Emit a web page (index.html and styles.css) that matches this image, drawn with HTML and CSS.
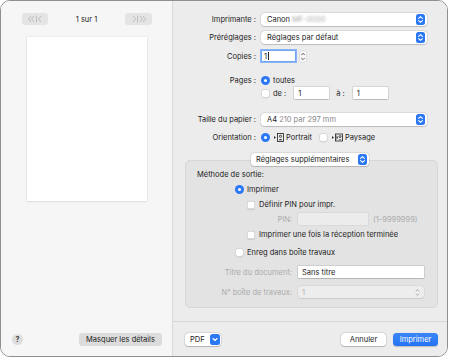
FILE: index.html
```html
<!DOCTYPE html>
<html lang="fr">
<head>
  <meta charset="UTF-8" />
  <meta name="viewport" content="width=device-width, initial-scale=1.0"/>
  <title>Imprimer</title>
  <link rel="stylesheet" href="styles.css">
</head>
<body>
  <div class="window">
    <aside class="sidebar">
      <div class="pager">
        <span class="pager-btn">
          <svg width="26" height="12" viewBox="0 0 26 12"><path d="M9 3 L6.5 6 L9 9 M12 3 L9.5 6 L12 9 M14.5 2.5 V9.5 M19 3 L16.5 6 L19 9" /></svg>
        </span>
        <span class="pager-count">1 sur 1</span>
        <span class="pager-btn">
          <svg width="27" height="12" viewBox="0 0 27 12"><path d="M8 3 L10.5 6 L8 9 M12.5 2.5 V9.5 M15 3 L17.5 6 L15 9 M18 3 L20.5 6 L18 9" /></svg>
        </span>
      </div>
      <div class="preview"></div>
      <div class="side-foot">
        <span class="help">?</span>
        <button class="btn btn-grey">Masquer les détails</button>
      </div>
    </aside>

    <section class="main">
      <div class="row row-printer">
        <span class="lbl">Imprimante :</span>
        <div class="popup">
          <span>Canon</span><span class="blurred">MF-0000</span>
          <span class="badge"><svg width="9" height="11" viewBox="0 0 9 11"><path d="M2.6 4.3 L4.5 2.6 L6.4 4.3 M2.6 6.7 L4.5 8.4 L6.4 6.7" /></svg></span>
        </div>
      </div>
      <div class="row row-presets">
        <span class="lbl">Préréglages :</span>
        <div class="popup">
          <span>Réglages par défaut</span>
          <span class="badge"><svg width="9" height="11" viewBox="0 0 9 11"><path d="M2.6 4.3 L4.5 2.6 L6.4 4.3 M2.6 6.7 L4.5 8.4 L6.4 6.7" /></svg></span>
        </div>
      </div>
      <div class="row row-copies">
        <span class="lbl">Copies :</span>
        <div class="field field-copies focus">1<span class="caret"></span></div>
        <span class="stepper">
          <svg width="8" height="13" viewBox="0 0 8 13"><rect x="0.5" y="0.5" width="7" height="12" rx="2.5" /><path d="M2.3 5 L4 3.3 L5.7 5 M2.3 8 L4 9.7 L5.7 8" /></svg>
        </span>
      </div>
      <div class="row row-pages">
        <span class="lbl">Pages :</span>
        <span class="radio on"></span><span>toutes</span>
      </div>
      <div class="row row-range">
        <span class="lbl"></span>
        <span class="radio"></span><span class="range-de">de :</span>
        <div class="field field-page">1</div>
        <span class="range-a">à :</span>
        <div class="field field-page">1</div>
      </div>
      <div class="row row-paper">
        <span class="lbl">Taille du papier :</span>
        <div class="popup">
          <span>A4 <span class="muted">210 par 297 mm</span></span>
          <span class="badge"><svg width="9" height="11" viewBox="0 0 9 11"><path d="M2.6 4.3 L4.5 2.6 L6.4 4.3 M2.6 6.7 L4.5 8.4 L6.4 6.7" /></svg></span>
        </div>
      </div>
      <div class="row row-orient">
        <span class="lbl">Orientation :</span>
        <span class="radio on"></span>
        <svg class="orient-icon" width="10" height="9" viewBox="0 0 10 9"><path class="tri" d="M0 3 L2 4.5 L0 6 Z" /><rect x="3.5" y="0.5" width="6" height="8" /><circle cx="6.5" cy="3.3" r="1.1" /><path class="fill" d="M4.6 7.2 Q6.5 4.6 8.4 7.2 Z" /></svg>
        <span class="orient-text">Portrait</span>
        <span class="radio"></span>
        <svg class="orient-icon" width="11" height="9" viewBox="0 0 11 9"><path class="tri" d="M0 3 L2 4.5 L0 6 Z" /><rect x="3.5" y="1" width="7" height="7" /><path class="fill" d="M4.5 2 V7 L6 4.5 Z" /><circle cx="8" cy="3.6" r="1" /><path class="fill" d="M6.5 6.8 Q8 5 9.5 6.8 Z" /></svg>
        <span>Paysage</span>
      </div>

      <div class="section-head">
        <div class="popup popup-section">
          <span>Réglages supplémentaires</span>
          <span class="badge"><svg width="9" height="11" viewBox="0 0 9 11"><path d="M2.6 4.3 L4.5 2.6 L6.4 4.3 M2.6 6.7 L4.5 8.4 L6.4 6.7" /></svg></span>
        </div>
      </div>
      <div class="group">
        <div class="brow brow-title">Méthode de sortie:</div>
        <div class="brow brow-print">
          <span class="radio on"></span><span>Imprimer</span>
        </div>
        <div class="brow brow-pin">
          <span class="check"></span><span>Définir PIN pour impr.</span>
        </div>
        <div class="brow brow-pinfield">
          <span class="blbl disabled">PIN:</span>
          <div class="field field-pin"></div>
          <span class="disabled pin-range">(1-9999999)</span>
        </div>
        <div class="brow brow-once">
          <span class="check"></span><span>Imprimer une fois la réception terminée</span>
        </div>
        <div class="brow brow-box">
          <span class="radio"></span><span>Enreg dans boîte travaux</span>
        </div>
        <div class="brow brow-doc">
          <span class="blbl disabled">Titre du document:</span>
          <div class="field field-doc">Sans titre</div>
        </div>
        <div class="brow brow-num">
          <span class="blbl disabled">N° boîte de travaux:</span>
          <div class="field field-doc field-off">
            <span>1</span>
            <svg width="7" height="9" viewBox="0 0 7 9"><path d="M1.8 3.3 L3.5 1.7 L5.2 3.3 M1.8 5.7 L3.5 7.3 L5.2 5.7" /></svg>
          </div>
        </div>
      </div>

      <div class="foot">
        <div class="btn btn-white btn-pdf">
          <span>PDF</span>
          <span class="badge"><svg width="10" height="11" viewBox="0 0 10 11"><path d="M3 4.5 L5 6.5 L7 4.5" /></svg></span>
        </div>
        <button class="btn btn-white btn-cancel">Annuler</button>
        <button class="btn btn-blue">Imprimer</button>
      </div>
    </section>
  </div>
</body>
</html>
```

FILE: styles.css
```css
body {
  margin: 0;
  background: #ffffff;
  font-family: Inter, "Liberation Sans", Arial, sans-serif;
  font-size: 7.5px;
  color: #1c1c1c;
}
.window {
  width: 446px;
  height: 355px;
  border: 1px solid #8f8f8f;
  border-radius: 10px;
  overflow: hidden;
  display: flex;
}

/* left column */
.sidebar {
  width: 171px;
  flex: none;
  background: #f6f6f6;
  border-right: 1px solid #d9d9d9;
  display: flex;
  flex-direction: column;
}
.pager {
  display: flex;
  justify-content: space-between;
  align-items: center;
  padding: 12px 20px 0 21px;
}
.pager-btn {
  height: 12px;
  background: #e4e4e4;
  border-radius: 3px;
  display: flex;
}
.pager-btn svg path {
  fill: none;
  stroke: #b9b9b9;
  stroke-width: 0.9;
}
.pager-count {
  color: #2a2a2a;
}
.preview {
  margin: 12px 0 0 26px;
  width: 120px;
  height: 164px;
  background: #ffffff;
  box-shadow: 0 0 0 0.5px rgba(0, 0, 0, 0.07), 0 1px 2px rgba(0, 0, 0, 0.07);
}
.side-foot {
  margin-top: auto;
  display: flex;
  align-items: center;
  padding: 0 10px 10px 11px;
}
.help {
  width: 11px;
  height: 11px;
  border-radius: 50%;
  background: #dedede;
  color: #3a3a3a;
  font-size: 7px;
  font-weight: 700;
  display: flex;
  align-items: center;
  justify-content: center;
}

/* buttons */
.btn {
  height: 13px;
  border: none;
  border-radius: 3.5px;
  padding: 0;
  font: inherit;
  color: #1c1c1c;
  display: flex;
  align-items: center;
  justify-content: center;
}
.btn-grey {
  margin-left: auto;
  width: 83px;
  background: #dcdcdc;
}
.btn-white {
  background: #ffffff;
  box-shadow: 0 0 0 0.5px rgba(0, 0, 0, 0.14), 0 0.5px 1px rgba(0, 0, 0, 0.18);
}
.btn-blue {
  width: 45px;
  margin-left: 7px;
  background: linear-gradient(#3b86f7, #2673f3);
  color: #ffffff;
  box-shadow: 0 0.5px 1px rgba(0, 0, 0, 0.2);
}

/* right column */
.main {
  flex: 1;
  background: #ececec;
  display: flex;
  flex-direction: column;
}
.row {
  display: flex;
  align-items: center;
  height: 13px;
}
.lbl {
  width: 83px;
  flex: none;
  margin-right: 5px;
  text-align: right;
}
.row-printer { margin-top: 12px; }
.row-presets { margin-top: 5px; }
.row-copies { margin-top: 5px; height: 14px; }
.row-pages { margin-top: 11px; }
.row-range { height: 12px; }
.row-paper { margin-top: 14px; }
.row-orient { margin-top: 5px; }

.popup {
  width: 166px;
  height: 13px;
  box-sizing: border-box;
  padding: 0 2px 0 6px;
  background: #ffffff;
  border-radius: 3.5px;
  box-shadow: 0 0 0 0.5px rgba(0, 0, 0, 0.13), 0 0.5px 1px rgba(0, 0, 0, 0.15);
  display: flex;
  align-items: center;
}
.popup .badge {
  margin-left: auto;
}
.badge {
  width: 9px;
  height: 11px;
  border-radius: 2.5px;
  background: #2b77f4;
  display: flex;
}
.badge svg path {
  fill: none;
  stroke: #ffffff;
  stroke-width: 1.1;
  stroke-linecap: round;
  stroke-linejoin: round;
}
.blurred {
  margin-left: 2px;
  color: #a9a9a9;
  filter: blur(1px);
}
.muted {
  color: #888888;
}

.field {
  height: 12px;
  box-sizing: border-box;
  padding-left: 4px;
  background: #ffffff;
  box-shadow: 0 0 0 0.5px rgba(0, 0, 0, 0.18), 0 0.5px 1px rgba(0, 0, 0, 0.12);
  display: flex;
  align-items: center;
}
.field-copies {
  width: 33px;
  height: 10px;
  margin-left: 1px;
  padding-left: 2px;
}
.focus {
  box-shadow: 0 0 0 0.5px #5a95f0, 0 0 0 2px #8ab6f7;
}
.caret {
  width: 1px;
  height: 8px;
  margin-left: 1px;
  background: #222;
}
.stepper {
  margin-left: 4px;
  display: flex;
}
.stepper rect {
  fill: #f7f7f7;
  stroke: #cfcfcf;
  stroke-width: 0.5;
}
.stepper path {
  fill: none;
  stroke: #444;
  stroke-width: 0.9;
}

.radio {
  width: 9px;
  height: 9px;
  flex: none;
  border-radius: 50%;
  background: #ffffff;
  box-shadow: inset 0 0 0 0.5px #b9b9b9, 0 0.5px 1px rgba(0, 0, 0, 0.12);
  margin-right: 3px;
  display: flex;
  align-items: center;
  justify-content: center;
}
.radio.on {
  background: #2b77f4;
  box-shadow: none;
}
.radio.on::after {
  content: "";
  width: 3.5px;
  height: 3.5px;
  border-radius: 50%;
  background: #ffffff;
}
.check {
  width: 8px;
  height: 8px;
  flex: none;
  border-radius: 2px;
  background: #ffffff;
  box-shadow: inset 0 0 0 0.5px #b9b9b9, 0 0.5px 1px rgba(0, 0, 0, 0.1);
  margin-right: 4px;
}
.range-de {
  margin-right: 8px;
}
.field-page {
  width: 35px;
}
.range-a {
  margin: 0 8px 0 7px;
}
.orient-icon {
  margin: 0 2px 0 1px;
}
.orient-icon .tri,
.orient-icon .fill {
  fill: #333;
}
.orient-icon rect,
.orient-icon circle {
  fill: none;
  stroke: #333;
  stroke-width: 0.9;
}
.orient-text {
  margin-right: 7px;
}

/* extra settings box */
.section-head {
  margin-top: 9px;
  margin-bottom: -6px;
  display: flex;
  justify-content: center;
  position: relative;
  z-index: 1;
}
.popup-section {
  width: 118px;
  padding: 0 2px 0 5px;
}
.group {
  margin: 0 9px 0 12px;
  padding: 7px 11px 9px;
  background: #e3e3e3;
  border: 1px solid #d6d6d6;
  border-radius: 5px;
}
.brow {
  display: flex;
  align-items: center;
  height: 13px;
}
.brow-title { height: 12px; }
.brow-print { margin-top: 3px; padding-left: 38px; }
.brow-pin { margin-top: 2px; padding-left: 50px; }
.brow-pinfield { margin-top: 2px; height: 12px; }
.brow-once { margin-top: 3px; padding-left: 50px; }
.brow-box { margin-top: 5px; padding-left: 38px; }
.brow-doc { margin-top: 7px; height: 12px; }
.brow-num { margin-top: 8px; height: 12px; }
.blbl {
  width: 95px;
  flex: none;
  margin-right: 6px;
  text-align: right;
}
.disabled {
  color: #ababab;
}
.field-pin {
  width: 70px;
  background: #ececec;
  box-shadow: 0 0 0 0.5px rgba(0, 0, 0, 0.08);
}
.pin-range {
  margin-left: 5px;
}
.field-doc {
  width: 126px;
}
.field-off {
  padding-right: 3px;
  border-radius: 3px;
  background: #ededed;
  box-shadow: 0 0 0 0.5px rgba(0, 0, 0, 0.08), 0 0.5px 1px rgba(0, 0, 0, 0.06);
  color: #b3b3b3;
  justify-content: space-between;
}
.field-off path {
  fill: none;
  stroke: #a8a8a8;
  stroke-width: 0.9;
}

/* bottom bar */
.foot {
  margin-top: auto;
  border-top: 1px solid #d6d6d6;
  padding: 11px 9px 10px 12px;
  display: flex;
  align-items: center;
}
.btn-pdf {
  width: 36px;
  box-sizing: border-box;
  padding: 0 1px 0 5px;
  justify-content: space-between;
}
.btn-pdf .badge {
  width: 10px;
}
.btn-cancel {
  width: 45px;
  margin-left: auto;
}
```
